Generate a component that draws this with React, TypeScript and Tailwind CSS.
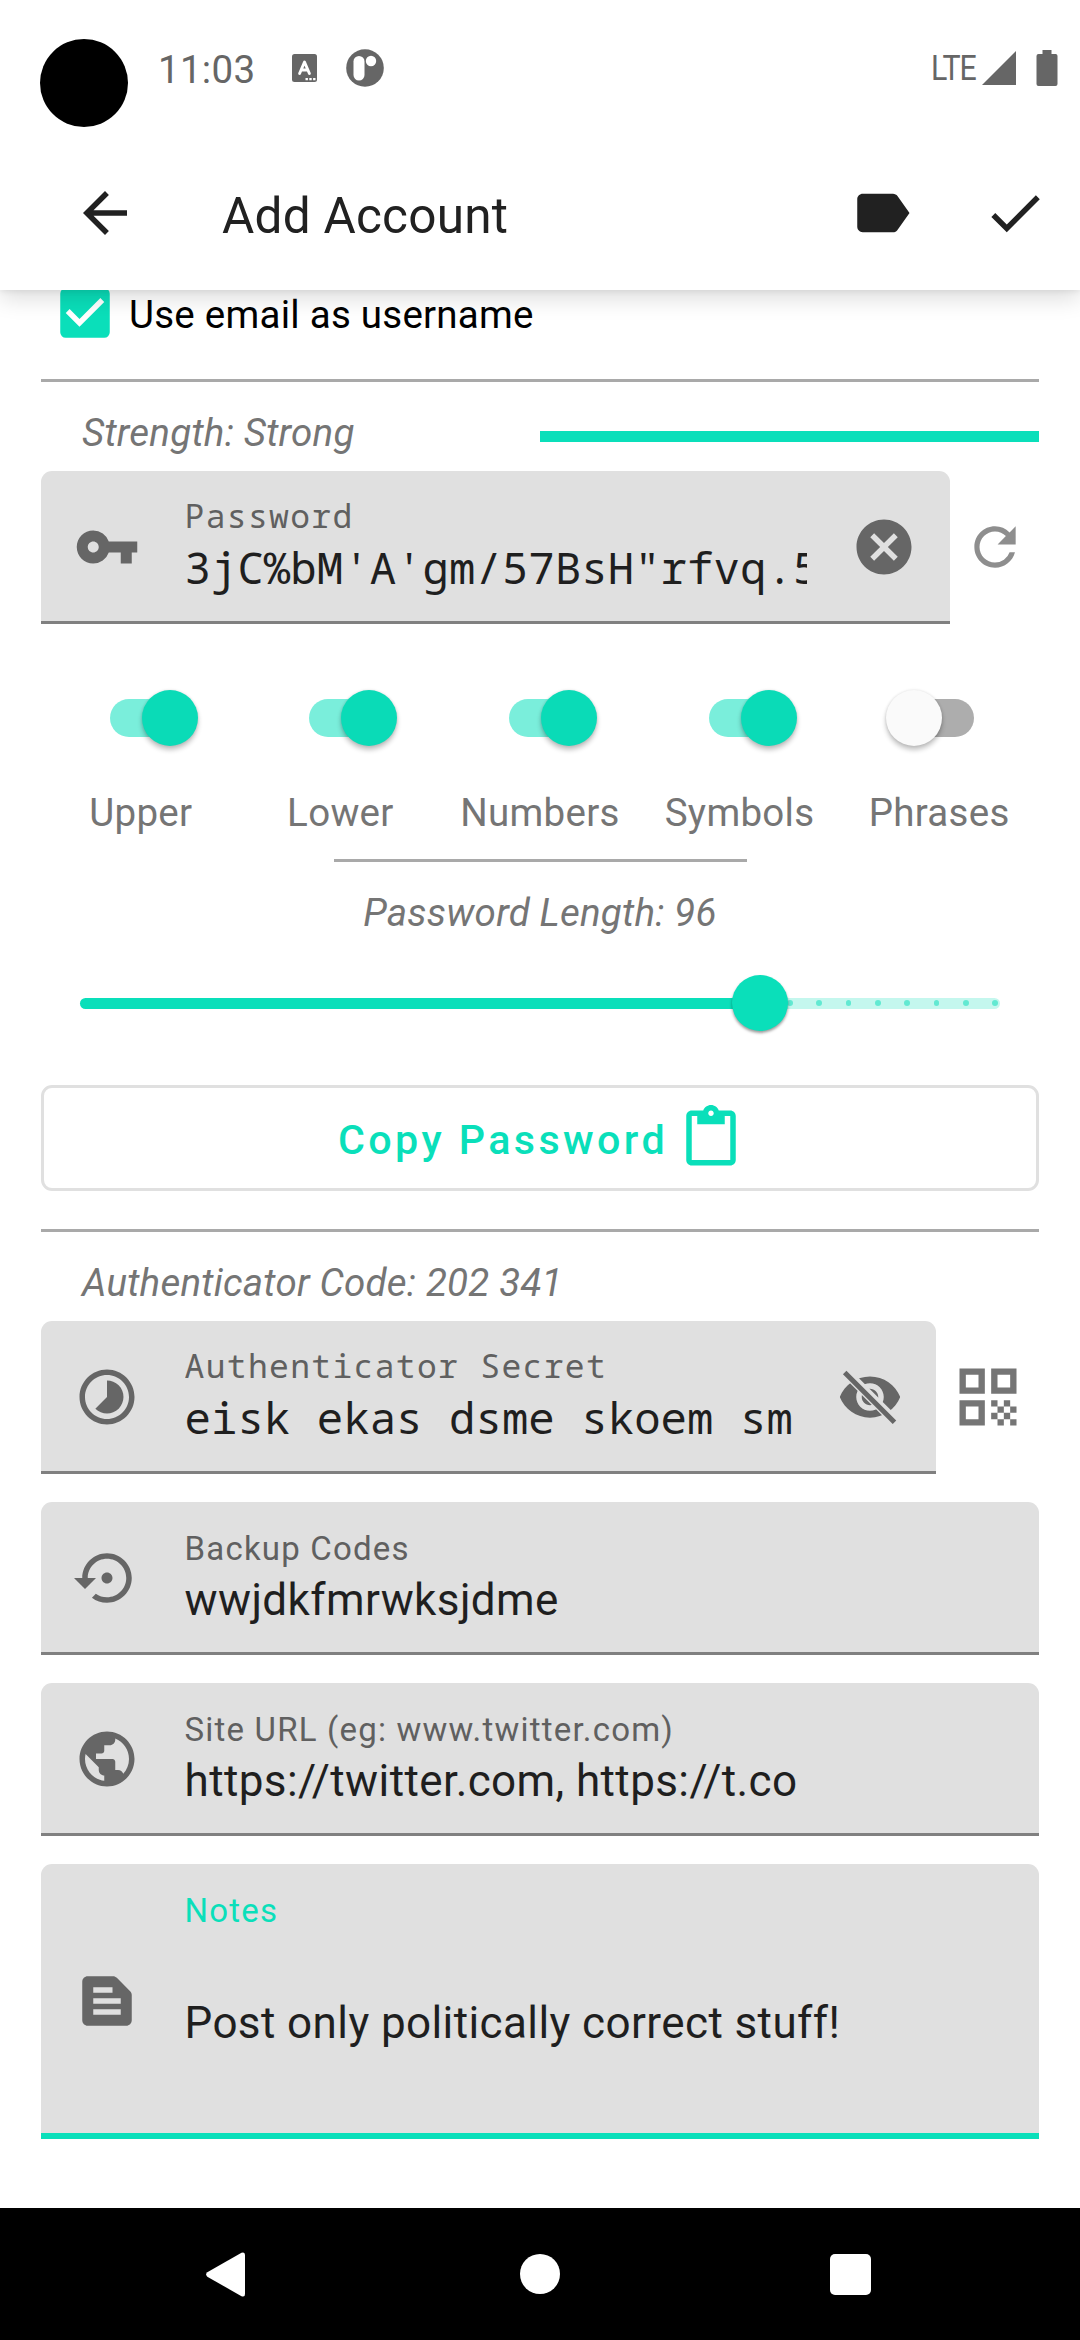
import type { ReactNode } from "react";
import {
  MdArrowBack,
  MdLabel,
  MdCheck,
  MdCheckBox,
  MdVpnKey,
  MdCancel,
  MdRefresh,
  MdContentPaste,
  MdQrCode,
} from "react-icons/md";

function Icon({ d }: { d: string }) {
  return (
    <svg viewBox="0 0 24 24" className="mt-[2px] size-[66px] shrink-0" fill="currentColor">
      <path d={d} />
    </svg>
  );
}

const TIMELAPSE =
  "M16.24 7.76C15.07 6.59 13.54 6 12 6v6l-4.24 4.24c2.34 2.34 6.14 2.34 8.49 0 2.34-2.34 2.34-6.14-.01-8.48zM12 2C6.48 2 2 6.48 2 12s4.48 10 10 10 10-4.48 10-10S17.52 2 12 2zm0 18c-4.42 0-8-3.58-8-8s3.58-8 8-8 8 3.58 8 8-3.58 8-8 8z";
const RESTORE =
  "M14 12c0-1.1-.9-2-2-2s-2 .9-2 2 .9 2 2 2 2-.9 2-2zm-2-9c-4.97 0-9 4.03-9 9H0l4 4 4-4H5c0-3.87 3.13-7 7-7s7 3.13 7 7-3.13 7-7 7c-1.51 0-2.91-.49-4.06-1.3l-1.42 1.44C8.04 20.3 9.94 21 12 21c4.97 0 9-4.03 9-9s-4.03-9-9-9z";
const GLOBE =
  "M12 2C6.48 2 2 6.48 2 12s4.48 10 10 10 10-4.48 10-10S17.52 2 12 2zm-1 17.93c-3.95-.49-7-3.85-7-7.93 0-.62.08-1.21.21-1.79L9 15v1c0 1.1.9 2 2 2v1.93zm6.9-2.54c-.26-.81-1-1.39-1.9-1.39h-1v-3c0-.55-.45-1-1-1H8v-2h2c.55 0 1-.45 1-1V7h2c1.1 0 2-.9 2-2v-.41c2.93 1.19 5 4.06 5 7.41 0 2.08-.8 3.97-2.1 5.39z";
const SNIPPET =
  "M20.41 8.41l-4.83-4.83C15.21 3.21 14.7 3 14.17 3H5c-1.1 0-2 .9-2 2v14c0 1.1.9 2 2 2h14c1.1 0 2-.9 2-2V9.83c0-.53-.21-1.04-.59-1.42zM7 7h7v2H7V7zm10 10H7v-2h10v2zm0-4H7v-2h10v2z";

function EyeOff() {
  return (
    <svg viewBox="0 0 24 24" className="mt-[2px] size-[66px] shrink-0" fill="currentColor">
      <clipPath id="eye-clip">
        <path d="M2 4.27L19.73 22l2.54-2.54L4.54 1.73V1H23v22H1V4.27z" />
      </clipPath>
      <path
        clipPath="url(#eye-clip)"
        d="M12 4.5C7 4.5 2.73 7.61 1 12c1.73 4.39 6 7.5 11 7.5s9.27-3.11 11-7.5c-1.73-4.39-6-7.5-11-7.5zM12 17c-2.76 0-5-2.24-5-5s2.24-5 5-5 5 2.24 5 5-2.24 5-5 5zm0-8c-1.66 0-3 1.34-3 3s1.34 3 3 3 3-1.34 3-3-1.34-3-3-3z"
      />
      <path d="M2.8 3.1L20.9 21.2" fill="none" stroke="currentColor" strokeWidth="1.8" />
    </svg>
  );
}

function StatusBar() {
  return (
    <div className="flex h-[136px] items-start bg-white text-[#666666]">
      <div className="mt-[39px] ml-[40px] size-[88px] rounded-full bg-black" />
      <span className="mt-[47px] ml-[30px] w-[100px] text-[38.5px] leading-[46px] tracking-[0.3px]">11:03</span>
      <svg viewBox="0 0 25 28" className="mt-[54px] ml-[34px] h-[28px] w-[25px]">
        <rect width="25" height="28" rx="2.5" fill="#666" />
        <path d="M7.6 19.5L12.5 8L17.4 19.5M9.5 16h6" fill="none" stroke="#fff" strokeWidth="2.9" strokeLinecap="round" strokeLinejoin="round" />
        <path d="M13.5 24h2.4v2.2h-2.4zM17.3 24h2.4v2.2h-2.4zM21.1 24h2.4v2.2h-2.4z" fill="#fff" />
      </svg>
      <svg viewBox="0 0 38 38" className="mt-[49px] ml-[29px] size-[38px]">
        <circle cx="19" cy="19" r="18.8" fill="#666" />
        <rect x="7.5" y="7" width="11" height="24.5" rx="5.5" fill="#fff" />
        <circle cx="25" cy="12" r="5.2" fill="#fff" />
      </svg>
      <span className="mt-[47px] ml-auto origin-right scale-x-[0.88] text-[34.5px] leading-[42px] tracking-[-1.1px]">
        LTE
      </span>
      <svg viewBox="0 0 34 34" className="mt-[51px] ml-[6px] size-[34px]" fill="#666">
        <path d="M34 0v34H0z" />
      </svg>
      <svg viewBox="0 0 22 36" className="mt-[50px] mr-[22px] ml-[20px] h-[36px] w-[22px]" fill="#666">
        <path d="M6.500 0h9v4H20a2 2 0 0 1 1.500 2v28a2 2 0 0 1-2 2h-17a2 2 0 0 1-2-2V6a2 2 0 0 1 2-2h4z" />
      </svg>
    </div>
  );
}

function AppBar() {
  return (
    <div className="flex h-[154px] items-center pr-[32px] pl-[72px] text-[#212121]">
      <MdArrowBack className="size-[66px]" />
      <h1 className="mt-[5px] ml-[84px] text-[49.5px] leading-[60px] tracking-[0.25px]">Add Account</h1>
      <MdLabel className="ml-auto size-[66px]" />
      <MdCheck className="ml-[67px] size-[66px]" />
    </div>
  );
}

type FieldProps = {
  icon: ReactNode;
  label: string;
  value: string;
  mono?: boolean;
  trailing?: ReactNode;
  className?: string;
};

function Field({ icon, label, value, mono, trailing, className = "" }: FieldProps) {
  return (
    <div
      className={`flex h-[153px] items-center rounded-t-[11px] border-b-[3px] border-[#808080] bg-[#e0e0e0] pl-[33px] text-[#666666] ${className}`}
    >
      {icon}
      <div
        className={`ml-[44.5px] flex h-full min-w-0 flex-1 flex-col gap-[5px] overflow-hidden whitespace-nowrap ${
          mono ? "pt-[25px] font-['Droid_Sans_Mono','Noto_Sans_Mono','DejaVu_Sans_Mono',monospace]" : "pt-[27px]"
        }`}
      >
        <span className={`text-[33px] leading-[40px] text-[#606060] ${mono ? "tracking-[1.33px]" : "tracking-[1.2px]"}`}>
          {label}
        </span>
        <span className={`text-[44px] leading-[52px] text-[#1f1f1f] ${mono ? "tracking-[0.05px]" : "tracking-[0.4px]"}`}>
          {value}
        </span>
      </div>
      {trailing}
    </div>
  );
}

function Toggle({ label, on }: { label: string; on: boolean }) {
  return (
    <div className="flex flex-1 flex-col items-center gap-[44px]">
      <div className={`relative ml-[4px] flex h-[56px] w-[110px] ${on ? "justify-end" : "justify-start"}`}>
        <div
          className={`absolute top-[9px] left-[22px] h-[38px] w-[66px] rounded-full ${on ? "bg-[#7aeedb]" : "bg-[#adadad]"}`}
        />
        <div
          className={`relative size-[56px] rounded-full shadow-[0_4px_5px_rgba(0,0,0,0.24),0_0_3px_rgba(0,0,0,0.12)] ${
            on ? "bg-[#0adbb7]" : "bg-[#fafafa]"
          }`}
        />
      </div>
      <span className="text-[38.5px] leading-[46px] tracking-[0.3px]">{label}</span>
    </div>
  );
}

function Slider() {
  return (
    <div className="relative mx-[39px] mt-[39px] flex h-[56px] items-center">
      <div className="h-[11px] w-[680px] rounded-l-full bg-[#0adfba]" />
      <div className="flex h-[11px] flex-1 items-center justify-between rounded-r-full bg-[#c4f7ee] pr-[2px] pl-[27px]">
        {Array.from({ length: 8 }, (_, i) => (
          <span key={i} className="size-[5.5px] rounded-full bg-[#62e9d2]" />
        ))}
      </div>
      <div className="absolute left-[652px] size-[56px] rounded-full bg-[#0adfba] shadow-[0_2px_3px_rgba(0,0,0,0.4)]" />
    </div>
  );
}

function Divider({ className = "" }: { className?: string }) {
  return <div className={`h-[3px] bg-[#a9a9a9] ${className}`} />;
}

const TOGGLES = [
  { label: "Upper", on: true },
  { label: "Lower", on: true },
  { label: "Numbers", on: true },
  { label: "Symbols", on: true },
  { label: "Phrases", on: false },
];

export default function App() {
  return (
    <div className="flex h-[2340px] w-[1080px] flex-col overflow-hidden bg-white font-[Roboto,sans-serif] text-[#757575]">
      <header className="relative z-10 bg-white shadow-[0_8px_22px_rgba(0,0,0,0.14),0_1px_6px_rgba(0,0,0,0.08)]">
        <StatusBar />
        <AppBar />
      </header>

      <main className="flex flex-1 flex-col px-[41px]">
        <div className="-mt-[10px] flex h-[66px] items-center gap-[11px] pl-[11px]">
          <MdCheckBox className="size-[66px] text-[#0adfba]" />
          <span className="mt-[4px] text-[38.5px] leading-[46px] tracking-[0.25px] text-black">
            Use email as username
          </span>
        </div>

        <Divider className="mt-[33px]" />

        <div className="flex pt-[28px] pb-[15px] pl-[41px]">
          <span className="w-[458px] text-[38.5px] leading-[46px] tracking-[0.22px] italic">Strength: Strong</span>
          <div className="mt-[21px] h-[11px] flex-1 bg-[#0adfba]" />
        </div>

        <div className="flex items-center">
          <Field
            className="w-[909px] pr-[33px]"
            mono
            icon={<MdVpnKey className="mt-[2px] size-[66px] shrink-0" />}
            label="Password"
            value={"3jC%bM'A'gm/57BsH\"rfvq.5"}
            trailing={<MdCancel className="mt-[2px] ml-[44px] size-[66px] shrink-0" />}
          />
          <MdRefresh className="-mt-[2px] ml-[14px] size-[62px] text-[#8e8e8e]" />
        </div>

        <div className="mt-[66px] flex">
          {TOGGLES.map((t) => (
            <Toggle key={t.label} {...t} />
          ))}
        </div>

        <Divider className="mt-[23px] w-[413px] self-center" />
        <span className="mt-[28px] text-center text-[38.5px] leading-[46px] tracking-[0.22px] italic">
          Password Length: 96
        </span>
        <Slider />

        <button className="mt-[54px] flex h-[106px] items-start justify-center rounded-[11px] border-[3px] border-[#e0e0e0] pl-[2px] text-[#0adfba]">
          <span className="mt-[27px] text-[41.25px] leading-[50px] font-medium tracking-[3.4px]">Copy Password</span>
          <MdContentPaste className="mt-[17px] ml-[10px] size-[66px]" />
        </button>

        <Divider className="mt-[38px]" />
        <span className="mt-[28px] mb-[15px] ml-[41px] text-[38.5px] leading-[46px] tracking-[0.22px] italic">
          Authenticator Code: 202 341
        </span>

        <div className="flex items-center">
          <Field
            className="w-[895px] pr-[33px]"
            mono
            icon={<Icon d={TIMELAPSE} />}
            label="Authenticator Secret"
            value="eisk ekas dsme skoem sm"
            trailing={
              <span className="ml-[33px]">
                <EyeOff />
              </span>
            }
          />
          <MdQrCode className="-mt-[2px] ml-[14px] size-[76px]" />
        </div>

        <Field className="mt-[28px]" icon={<Icon d={RESTORE} />} label="Backup Codes" value="wwjdkfmrwksjdme" />
        <Field
          className="mt-[28px]"
          icon={<Icon d={GLOBE} />}
          label="Site URL (eg: www.twitter.com)"
          value="https://twitter.com, https://t.co"
        />

        <div className="mt-[28px] flex h-[275px] items-center rounded-t-[11px] border-b-[6px] border-[#0adfba] bg-[#e0e0e0] pl-[33px] text-[#666666]">
          <span className="mt-[3px]">
            <Icon d={SNIPPET} />
          </span>
          <div className="ml-[44.5px] flex h-full flex-col gap-[66px] pt-[27px]">
            <span className="text-[33px] leading-[40px] tracking-[1.2px] text-[#0adfba]">Notes</span>
            <span className="text-[44px] leading-[52px] tracking-[0.4px] text-[#1f1f1f]">
              Post only politically correct stuff!
            </span>
          </div>
        </div>
      </main>

      <nav className="flex h-[132px] items-center bg-black pl-[206px] text-white">
        <svg viewBox="0 0 39 45" className="h-[45px] w-[39px]" fill="#fff">
          <path d="M1.300 20.300L35.500 0.800Q39 -0.500 39 3v39Q39 45.500 35.500 44.200L1.300 24.700Q-1 22.500 1.300 20.300z" />
        </svg>
        <span className="ml-[275px] size-[40px] rounded-full bg-white" />
        <span className="ml-[270px] size-[41px] rounded-[5px] bg-white" />
      </nav>
    </div>
  );
}
